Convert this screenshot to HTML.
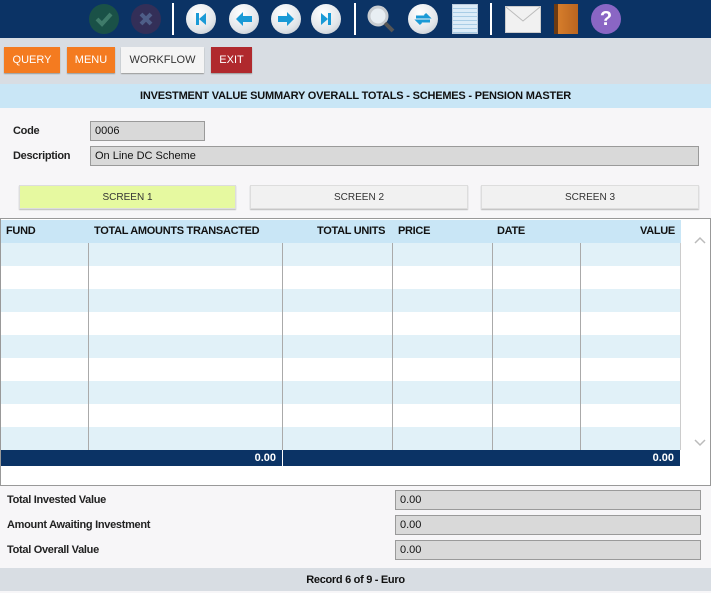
<!DOCTYPE html>
<html><head><style>
*{box-sizing:border-box;margin:0;padding:0}
body{width:711px;height:591px;position:relative;background:#f7f6f8;font-family:"Liberation Sans",sans-serif;font-size:11px;color:#111;overflow:hidden}
.a{position:absolute}
.top{left:0;top:0;width:711px;height:38px;background:#0b3365}
.sep{top:3px;width:2px;height:32px;background:#fff}
.circ{width:30px;height:30px;border-radius:50%;top:4px;background:radial-gradient(circle at 40% 30%,#fff,#e2e6ea 60%,#b9c1c8);}
.bar{left:0;top:38px;width:711px;height:46px;background:#d8dde3}
.btn{top:47px;height:26px;line-height:26px;text-align:center;color:#fff;font-size:11px;box-shadow:0 1px 1px #999}
.title{left:0;top:84px;width:711px;height:24px;background:#c9e6f6;text-align:center;line-height:24px;font-weight:bold;font-size:11px;letter-spacing:-0.2px}
.inp{background:#d9d9d9;border:1px solid #9a9a9a;height:20px;line-height:18px;padding-left:4px;font-size:11px}
.tab{top:185px;height:24px;line-height:24px;text-align:center;border:1px solid #ddd;background:#f1f1f1;font-size:10px;color:#333;box-shadow:0 1px 1px #bbb}
.lbl{font-size:11px;font-weight:bold;letter-spacing:-0.3px;color:#222}
.h{top:225px;font-weight:bold;letter-spacing:-0.3px}
</style></head><body>
<div class="a top"></div>
<div class="a" style="left:89px;top:4px;width:30px;height:30px;border-radius:50%;background:#1a5147"></div>
<svg class="a" style="left:89px;top:4px" width="30" height="30"><path d="M8 15l5 5 9-10" stroke="#3f7b6a" stroke-width="4" fill="none"/></svg>
<div class="a" style="left:131px;top:4px;width:30px;height:30px;border-radius:50%;background:#332f58"></div>
<svg class="a" style="left:131px;top:4px" width="30" height="30"><path d="M10 10l10 10M20 10l-10 10" stroke="#4e5e88" stroke-width="4"/></svg>
<div class="a sep" style="left:172px"></div>
<div class="a circ" style="left:186px"></div><svg class="a" style="left:186px;top:4px" width="30" height="30"><path d="M10 9v12h3V9zM13 15l7-6v12z" fill="#1a9ad6"/></svg>
<div class="a circ" style="left:229px"></div><svg class="a" style="left:229px;top:4px" width="30" height="30"><path d="M7 15l7-7v4h9v6h-9v4z" fill="#1a9ad6"/></svg>
<div class="a circ" style="left:271px"></div><svg class="a" style="left:271px;top:4px" width="30" height="30"><path d="M23 15l-7-7v4H7v6h9v4z" fill="#1a9ad6"/></svg>
<div class="a circ" style="left:311px"></div><svg class="a" style="left:311px;top:4px" width="30" height="30"><path d="M17 9h3v12h-3zM10 9l7 6-7 6z" fill="#1a9ad6"/></svg>
<div class="a sep" style="left:354px"></div>
<svg class="a" style="left:364px;top:3px" width="34" height="34"><circle cx="14" cy="13" r="9" fill="#e8eef3" stroke="#c8ccd0" stroke-width="3"/><path d="M21 20l8 8" stroke="#555" stroke-width="4"/></svg>
<div class="a circ" style="left:408px"></div><svg class="a" style="left:408px;top:4px" width="30" height="30"><path d="M8 13h12l-3-3M22 17H10l3 3" stroke="#1a9ad6" stroke-width="3" fill="none"/></svg>
<div class="a" style="left:452px;top:4px;width:26px;height:30px;background:repeating-linear-gradient(#dcecf8 0 3px,#a9cde6 3px 4px);border:1px solid #bcd"></div>
<div class="a sep" style="left:490px"></div>
<div class="a" style="left:505px;top:6px;width:36px;height:27px;background:#f1f1f1;border:1px solid #ccc"></div>
<svg class="a" style="left:505px;top:6px" width="36" height="27"><path d="M1 1l17 14 17-14" stroke="#bbb" fill="none"/></svg>
<div class="a" style="left:554px;top:4px;width:24px;height:30px;background:linear-gradient(90deg,#6e3b12 0 4px,#d67d2b 4px,#b96520)"></div>
<div class="a" style="left:591px;top:4px;width:30px;height:30px;border-radius:50%;background:#8a66c4;color:#fff;font-weight:bold;font-size:20px;text-align:center;line-height:30px">?</div>
<div class="a bar"></div>
<div class="a btn" style="left:4px;width:56px;background:#f47b20">QUERY</div>
<div class="a btn" style="left:67px;width:48px;background:#f47b20">MENU</div>
<div class="a btn" style="left:121px;width:83px;background:#f4f4f4;color:#333">WORKFLOW</div>
<div class="a btn" style="left:211px;width:41px;background:#b0292d">EXIT</div>
<div class="a title">INVESTMENT VALUE SUMMARY OVERALL TOTALS - SCHEMES - PENSION MASTER</div>
<div class="a lbl" style="left:13px;top:125px">Code</div>
<div class="a inp" style="left:90px;top:121px;width:115px">0006</div>
<div class="a lbl" style="left:13px;top:150px">Description</div>
<div class="a inp" style="left:90px;top:146px;width:609px">On Line DC Scheme</div>
<div class="a tab" style="left:19px;width:217px;background:#e6f9a0">SCREEN 1</div>
<div class="a tab" style="left:250px;width:218px">SCREEN 2</div>
<div class="a tab" style="left:481px;width:218px">SCREEN 3</div>
<div class="a" style="left:0;top:218px;width:711px;height:268px;border:1px solid #999;background:#fff"></div>
<div class="a" style="left:1px;top:220px;width:680px;height:23px;background:#c9e6f6"></div>
<div class="a" style="left:1px;top:243px;width:680px;height:207px;background:repeating-linear-gradient(#e1f1f8 0 23px,#fff 23px 46px)"></div>
<div class="a" style="left:88px;top:243px;width:1px;height:207px;background:#aaa"></div>
<div class="a" style="left:282px;top:243px;width:1px;height:207px;background:#aaa"></div>
<div class="a" style="left:392px;top:243px;width:1px;height:207px;background:#aaa"></div>
<div class="a" style="left:492px;top:243px;width:1px;height:207px;background:#aaa"></div>
<div class="a" style="left:580px;top:243px;width:1px;height:207px;background:#aaa"></div>
<div class="a" style="left:680px;top:243px;width:1px;height:207px;background:#ccc"></div>
<div class="a h" style="left:6px">FUND</div>
<div class="a h" style="left:94px">TOTAL AMOUNTS TRANSACTED</div>
<div class="a h" style="left:317px">TOTAL UNITS</div>
<div class="a h" style="left:398px">PRICE</div>
<div class="a h" style="left:497px">DATE</div>
<div class="a h" style="left:640px">VALUE</div>
<svg class="a" style="left:694px;top:235px" width="12" height="10"><path d="M1 8l5-5 5 5" stroke="#bbb" stroke-width="1.5" fill="none"/></svg>
<svg class="a" style="left:694px;top:438px" width="12" height="10"><path d="M1 2l5 5 5-5" stroke="#bbb" stroke-width="1.5" fill="none"/></svg>
<div class="a" style="left:1px;top:450px;width:679px;height:16px;background:#0b3365"></div>
<div class="a" style="left:282px;top:450px;width:1px;height:16px;background:#fff"></div>
<div class="a" style="left:200px;width:76px;top:452px;text-align:right;color:#fff;font-weight:bold">0.00</div>
<div class="a" style="left:580px;width:94px;top:452px;text-align:right;color:#fff;font-weight:bold">0.00</div>
<div class="a lbl" style="left:7px;top:494px">Total Invested Value</div>
<div class="a inp" style="left:395px;top:490px;width:306px">0.00</div>
<div class="a lbl" style="left:7px;top:519px">Amount Awaiting Investment</div>
<div class="a inp" style="left:395px;top:515px;width:306px">0.00</div>
<div class="a lbl" style="left:7px;top:544px">Total Overall Value</div>
<div class="a inp" style="left:395px;top:540px;width:306px">0.00</div>
<div class="a" style="left:0;top:568px;width:711px;height:23px;background:#d8dde3;text-align:center;line-height:25px;font-weight:bold;letter-spacing:-0.3px">Record 6 of 9 - Euro</div>
</body></html>
